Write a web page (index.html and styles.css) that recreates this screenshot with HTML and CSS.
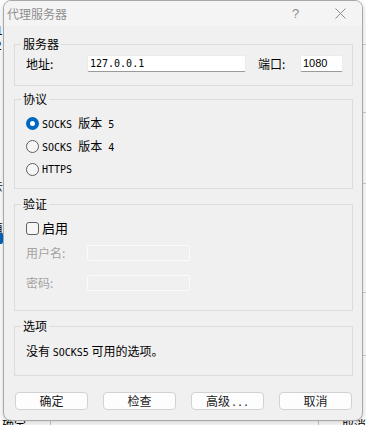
FILE: index.html
```html
<!DOCTYPE html>
<html lang="zh-CN">

<head>
    <meta charset="UTF-8">
    <meta name="viewport" content="width=device-width, initial-scale=1.0">
    <title>代理服务器</title>
    <link rel="stylesheet" href="styles.css">
</head>

<body>
    <!-- окно позади диалога, видны только края -->
    <div class="desk">
        <span class="frag fr1">1</span>
        <span class="frag fr2">2</span>
        <span class="frag fr3">去</span>
        <span class="frag fr4">值</span>
        <span class="blueMark"></span>
        <span class="frag fr5">确定</span>
        <span class="frag fr6">取消</span>
        <span class="deskLine dl1"></span>
        <span class="deskLine dl2"></span>
        <span class="deskHr h1"></span>
        <span class="deskHr h2"></span>
        <span class="deskHr h3"></span>
        <span class="deskHr h4"></span>
        <span class="deskHr h5"></span>
    </div>

    <div class="dialog">
        <div class="titlebar">
            <span class="title">代理服务器</span>
            <span class="help">?</span>
            <span class="close">
                <svg width="11" height="11" viewBox="0 0 11 11">
                    <path d="M0.5 0.5 L10.5 10.5 M10.5 0.5 L0.5 10.5" stroke="#8c8c8c" stroke-width="1" fill="none" />
                </svg>
            </span>
        </div>

        <div class="content">
            <fieldset class="group server">
                <legend>服务器</legend>
                <div class="row">
                    <span class="lbl addrLbl">地址:</span>
                    <div class="input addrIn"><span class="m">127.0.0.1</span></div>
                    <span class="lbl portLbl">端口:</span>
                    <div class="input portIn">1080</div>
                </div>
            </fieldset>

            <fieldset class="group proto">
                <legend>协议</legend>
                <div class="radioRow">
                    <span class="radio checked"></span>
                    <span><span class="m">SOCKS </span>版本<span class="m"> 5</span></span>
                </div>
                <div class="radioRow">
                    <span class="radio"></span>
                    <span><span class="m">SOCKS </span>版本<span class="m"> 4</span></span>
                </div>
                <div class="radioRow">
                    <span class="radio"></span>
                    <span class="m">HTTPS</span>
                </div>
            </fieldset>

            <fieldset class="group auth">
                <legend>验证</legend>
                <div class="checkRow">
                    <span class="check"></span>
                    <span class="checkText">启用</span>
                </div>
                <div class="authRow">
                    <span class="lbl off">用户名:</span>
                    <div class="input disabled"></div>
                </div>
                <div class="authRow">
                    <span class="lbl off">密码:</span>
                    <div class="input disabled"></div>
                </div>
            </fieldset>

            <fieldset class="group opts">
                <legend>选项</legend>
                <div class="optText">没有 <span class="m">SOCKS5</span> 可用的选项。</div>
            </fieldset>
        </div>

        <div class="buttons">
            <button class="btn">确定</button>
            <button class="btn">检查</button>
            <button class="btn">高级<span class="m dots">...</span></button>
            <button class="btn">取消</button>
        </div>
    </div>
</body>

</html>
```

FILE: styles.css
```css
html,
body {
    margin: 0;
    padding: 0;
    width: 366px;
    height: 425px;
    overflow: hidden;
    background-color: #ffffff;
    font-family: "Noto Sans CJK SC", "Noto Sans", sans-serif;
    font-size: 12px;
    color: #000000;
}

/* --- фон --- */

.desk {
    position: absolute;
    left: 0;
    top: 0;
    width: 366px;
    height: 425px;
}

.frag {
    position: absolute;
    font-size: 12px;
    line-height: 14px;
    color: #000000;
}

.fr1 {
    left: -4px;
    top: 23px;
}

.fr2 {
    left: -5px;
    top: 38px;
}

.fr3 {
    left: -9px;
    top: 179px;
    color: #444444;
}

.fr4 {
    left: -9px;
    top: 221px;
}

.fr5 {
    left: 2px;
    top: 418px;
}

.fr6 {
    left: 342px;
    top: 418px;
}

.blueMark {
    position: absolute;
    left: 0;
    top: 233px;
    width: 3px;
    height: 11px;
    background-color: #0067c0;
    border-radius: 0 2px 2px 0;
}

.deskLine {
    position: absolute;
    top: 420px;
    width: 1px;
    height: 5px;
    background-color: #c8c8c8;
}

.dl1 {
    left: 50px;
}

.dl2 {
    left: 318px;
}

.deskHr {
    position: absolute;
    left: 362px;
    width: 4px;
    height: 1px;
    background-color: #d0d0d0;
}

.h1 {
    top: 44px;
}

.h2 {
    top: 112px;
}

.h3 {
    top: 183px;
}

.h4 {
    top: 292px;
}

.h5 {
    top: 355px;
}

/* --- диалог --- */

.dialog {
    position: relative;
    margin-left: 3px;
    width: 360px;
    height: 421px;
    box-sizing: border-box;
    border: 1px solid #a8a8a8;
    border-radius: 8px;
    background-color: #f0f0f0;
    box-shadow: 0 2px 6px rgba(0, 0, 0, 0.18);
    display: flex;
    flex-direction: column;
}

.titlebar {
    height: 25px;
    background-color: #f4f4f4;
    border-radius: 7px 7px 0 0;
    display: flex;
    align-items: center;
    padding-left: 3px;
}

.title {
    color: #8f8f8f;
    line-height: 16px;
    flex: 1;
}

.help {
    width: 10px;
    color: #8f8f8f;
    font-family: "Liberation Sans", sans-serif;
    font-size: 13px;
    margin-right: 33px;
}

.close {
    width: 11px;
    height: 11px;
    margin-right: 16px;
    display: flex;
}

.content {
    padding: 10px 9px 0 10px;
    display: flex;
    flex-direction: column;
}

.group {
    margin: 0;
    padding: 0 9px 0 11px;
    border: 1px solid #dcdcdc;
    min-width: 0;
}

.group legend {
    padding: 0 2px;
    margin-left: -5px;
    line-height: 16px;
}

.m {
    font-family: "DejaVu Sans Mono", monospace;
    font-size: 10px;
}

.lbl {
    line-height: 16px;
}

.input {
    box-sizing: border-box;
    height: 17px;
    background-color: #ffffff;
    border: 1px solid #ebebeb;
    border-bottom-color: #9a9a9a;
    border-radius: 2px;
    padding-left: 2px;
    line-height: 15px;
    font-family: "Liberation Sans", sans-serif;
    font-size: 11px;
}

/* сервер */

.server {
    padding-top: 3px;
    padding-bottom: 13px;
}

.row {
    display: flex;
    align-items: center;
}

.addrLbl {
    width: 61px;
}

.addrIn {
    width: 159px;
}

.portLbl {
    margin-left: 12px;
    width: 42px;
}

.portIn {
    width: 43px;
}

/* протокол */

.proto {
    margin-top: 5px;
    padding-top: 5px;
    padding-bottom: 7px;
}

.radioRow {
    height: 23px;
    display: flex;
    align-items: center;
    gap: 3px;
    line-height: 16px;
}

.radio {
    box-sizing: border-box;
    width: 13px;
    height: 13px;
    border-radius: 50%;
    border: 1px solid #5f5f5f;
    background-color: #f6f6f6;
}

.radio.checked {
    border: 4px solid #0067c0;
    background-color: #ffffff;
}

/* проверка */

.auth {
    margin-top: 7px;
    padding-top: 6px;
    padding-bottom: 12px;
}

.checkRow {
    height: 20px;
    display: flex;
    align-items: center;
    gap: 3px;
}

.check {
    box-sizing: border-box;
    width: 13px;
    height: 13px;
    border: 1px solid #5f5f5f;
    border-radius: 3px;
    background-color: #f6f6f6;
}

.checkText {
    font-size: 13px;
    line-height: 16px;
}

.authRow {
    height: 30px;
    display: flex;
    align-items: center;
}

.authRow .lbl {
    width: 61px;
}

.off {
    color: #a3a3a3;
}

.disabled {
    width: 103px;
    height: 16px;
    background-color: #f0f0f0;
    border: 1px solid #fbfbfb;
}

/* опции */

.opts {
    margin-top: 7px;
    padding-top: 7px;
    padding-bottom: 14px;
}

.optText {
    height: 20px;
    line-height: 20px;
}

/* кнопки */

.buttons {
    margin-top: 16px;
    padding: 0 10px 0 11px;
    display: flex;
    justify-content: space-between;
}

.btn {
    box-sizing: border-box;
    width: 73px;
    height: 18px;
    padding: 0;
    background-color: #fdfdfd;
    border: 1px solid #d2d2d2;
    border-radius: 4px;
    font-family: "Noto Sans CJK SC", sans-serif;
    font-size: 12px;
    line-height: 16px;
    color: #1b1b1b;
}

.dots {
    margin-left: 1px;
}
```
